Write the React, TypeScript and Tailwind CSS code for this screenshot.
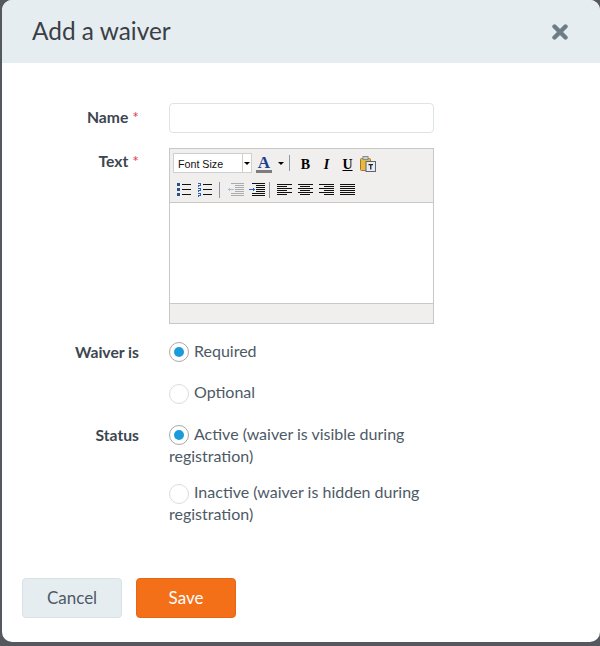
const font = "font-['Lato','Open_Sans',sans-serif]";

function Lines({ kind }: { kind: 'left' | 'center' | 'right' | 'full' }) {
  const rows = [0, 1, 2, 3, 4, 5];
  return (
    <svg width="15" height="12" viewBox="0 0 15 12" shapeRendering="crispEdges">
      {rows.map((r) => {
        const w = kind === 'full' || r % 2 === 0 ? 15 : 10;
        const x = kind === 'left' || kind === 'full' ? 0 : kind === 'center' ? (15 - w) / 2 : 15 - w;
        return <rect key={r} x={Math.floor(x)} y={r * 2} width={w} height="1" fill="#111" />;
      })}
    </svg>
  );
}

function BulletList() {
  return (
    <svg width="14" height="14" viewBox="0 0 14 14" shapeRendering="crispEdges">
      {[1, 6, 11].map((y) => (
        <g key={y}>
          <rect x="0" y={y - 1} width="3" height="3" fill="#28528f" />
          <rect x="5" y={y} width="9" height="1" fill="#111" />
        </g>
      ))}
    </svg>
  );
}

function NumberList() {
  return (
    <svg width="14" height="15" viewBox="0 0 14 15" shapeRendering="crispEdges">
      {[0, 5, 10].map((y) => (
        <g key={y}>
          <rect x="0" y={y} width="3" height="1" fill="#2a62b8" />
          <rect x="2" y={y + 1} width="1" height="1" fill="#2a62b8" />
          <rect x="0" y={y + 2} width="3" height="1" fill="#2a62b8" />
          <rect x="0" y={y + 3} width="1" height="1" fill="#2a62b8" />
          <rect x="5" y={y + 1} width="9" height="1" fill="#111" />
        </g>
      ))}
    </svg>
  );
}

function Indent({ out }: { out?: boolean }) {
  const c = out ? '#a9adb0' : '#111';
  const a = out ? '#a9bdd6' : '#1f63c4';
  return (
    <svg width="16" height="14" viewBox="0 0 16 14" shapeRendering="crispEdges">
      {[0, 2, 4, 6, 8, 10, 12].map((y, i) => (
        <rect key={y} x={i > 0 && i < 5 ? 7 : 3} y={y} width={i > 0 && i < 5 ? 9 : 13} height="1" fill={c} />
      ))}
      <rect x="0" y="6" width="6" height="1" fill={a} />
      <rect x={out ? 1 : 4} y="5" width="1" height="3" fill={a} />
    </svg>
  );
}

function Paste() {
  return (
    <svg width="16" height="16" viewBox="0 0 16 16">
      <rect x="0.5" y="2.5" width="10" height="12" rx="1" fill="#e8b93e" stroke="#a5762a" />
      <rect x="3" y="0.5" width="5" height="3" fill="#cfcfcf" stroke="#8a8a8a" />
      <rect x="6" y="5.5" width="9.5" height="10" fill="#e8edf3" stroke="#5b6775" />
      <path d="M8.5 8h4.5v1.2H11.4V13.5H10.1V9.2H8.5z" fill="#222" />
    </svg>
  );
}

function Caret() {
  return <span className="w-0 h-0 border-x-[3px] border-x-transparent border-t-[3px] border-t-black" />;
}

function Divider() {
  return <span className="w-px h-[16px] bg-[#8a9aa8]" />;
}

function Tool({ children, w = 'w-[21px]' }: { children: React.ReactNode; w?: string }) {
  return <span className={`${w} h-[20px] flex items-center justify-center shrink-0`}>{children}</span>;
}

function Editor() {
  return (
    <div className="w-[265px] h-[176px] border border-[#c8c8c8] flex flex-col bg-white">
      <div className="h-[54px] bg-[#f0efed] border-b border-[#c8c8c8] pl-[3px] pt-[4px] flex flex-col gap-[7px]">
        <div className="flex items-center h-[20px]">
          <div className="w-[79px] h-[20px] bg-white border border-[#cfcfcf] flex items-center">
            <span className="flex-1 pl-[4px] text-[10.7px] pt-[2px] text-[#111] font-['Liberation_Sans',sans-serif]">Font Size</span>
            <span className="w-[9px] h-full border-l border-[#cfcfcf] flex items-center justify-center"><Caret /></span>
          </div>
          <span className="w-[4px]" />
          <span className="w-[16px] flex flex-col items-center leading-none pt-[2px]">
            <span className="font-['Liberation_Serif',serif] font-bold text-[17px] leading-[14px] text-[#1f3f8f]">A</span>
            <span className="w-[16px] h-[3px] bg-[#7d7d7d]" />
          </span>
          <span className="w-[6px]" />
          <Caret />
          <span className="w-[5px]" />
          <Divider />
          <span className="w-[5px]" />
          <Tool><span className="font-['Liberation_Serif',serif] font-bold text-[14px] pt-[2px] text-black">B</span></Tool>
          <Tool><span className="font-['Liberation_Serif',serif] font-bold italic text-[14px] pt-[2px] text-black">I</span></Tool>
          <Tool><span className="font-['Liberation_Serif',serif] font-bold underline text-[14px] pt-[2px] text-black">U</span></Tool>
          <Tool w="w-[20px]"><span className="pt-[2px] flex"><Paste /></span></Tool>
        </div>
        <div className="flex items-center h-[20px]">
          <Tool><BulletList /></Tool>
          <Tool><NumberList /></Tool>
          <span className="w-[4px]" />
          <Divider />
          <span className="w-[5px]" />
          <Tool><Indent out /></Tool>
          <Tool><Indent /></Tool>
          <span className="w-[2px]" />
          <Divider />
          <span className="w-[4px]" />
          <Tool><Lines kind="left" /></Tool>
          <Tool><Lines kind="center" /></Tool>
          <Tool><Lines kind="right" /></Tool>
          <Tool><Lines kind="full" /></Tool>
        </div>
      </div>
      <div className="flex-1" />
      <div className="h-[20px] bg-[#f0efed] border-t border-[#c8c8c8]" />
    </div>
  );
}

function Radio({ on, label }: { on?: boolean; label: string }) {
  return (
    <div className="text-[16px] leading-[22px] text-[#4d5a66] w-[265px]">
      <span
        className={`inline-flex -my-[6px] align-[0px] items-center justify-center w-[20px] h-[20px] rounded-full border mr-[5px] ${
          on ? 'border-[#a9a9a9]' : 'border-[#dcdcdc]'
        }`}
      >
        {on && <span className="w-[10px] h-[10px] rounded-full bg-[#1a9bdc]" />}
      </span>
      {label}
    </div>
  );
}

function Label({ text, required }: { text: string; required?: boolean }) {
  return (
    <div className="w-[137px] shrink-0 text-right text-[15.7px] font-bold text-[#3d4650] leading-[22px]">
      {text}
      {required && <span className="text-[#e0454f] font-normal"> *</span>}
    </div>
  );
}

export default function App() {
  return (
    <div className={`w-[600px] h-[646px] bg-[#55585f] pl-[2px] pb-[4px] overflow-hidden ${font}`}>
      <div className="h-full bg-white rounded-[10px] flex flex-col overflow-hidden">
        <div className="h-[63px] shrink-0 bg-[#e6edf0] pl-[30px] pr-[32px] flex items-center justify-between">
          <h1 className="text-[24.4px] font-normal text-[#3a3f45]">Add a waiver</h1>
          <svg width="16" height="16" viewBox="0 0 16 16">
            <path d="M2.5 2.5L13.5 13.5M13.5 2.5L2.5 13.5" stroke="#6f7c84" strokeWidth="4.4" strokeLinecap="round" />
          </svg>
        </div>

        <div className="flex-1 pt-[40px] flex flex-col">
          <div className="flex gap-[30px] items-start">
            <div className="pt-[3px]"><Label text="Name" required /></div>
            <div className="w-[265px] h-[30px] border border-[#dde3e6] rounded-[4px]" />
          </div>

          <div className="flex gap-[30px] items-start mt-[15px]">
            <div className="pt-[2px]"><Label text="Text" required /></div>
            <Editor />
          </div>

          <div className="flex gap-[30px] items-start mt-[16px]">
            <div className="pt-[1px]"><Label text="Waiver is" /></div>
            <div className="flex flex-col gap-[19px]">
              <Radio on label="Required" />
              <Radio label="Optional" />
            </div>
          </div>

          <div className="flex gap-[30px] items-start mt-[20px]">
            <div className="pt-[1px]"><Label text="Status" /></div>
            <div className="flex flex-col gap-[14px]">
              <Radio on label="Active (waiver is visible during registration)" />
              <Radio label="Inactive (waiver is hidden during registration)" />
            </div>
          </div>

          <div className="mt-auto pb-[24px] pl-[20px] flex gap-[14px]">
            <button className="w-[100px] h-[40px] rounded-[4px] bg-[#e6edf0] border border-[#d8e1e6] text-[17px] text-[#4d5a66]">Cancel</button>
            <button className="w-[100px] h-[40px] rounded-[4px] bg-[#f37019] border border-[#e56614] text-[17px] text-white">Save</button>
          </div>
        </div>
      </div>
    </div>
  );
}
